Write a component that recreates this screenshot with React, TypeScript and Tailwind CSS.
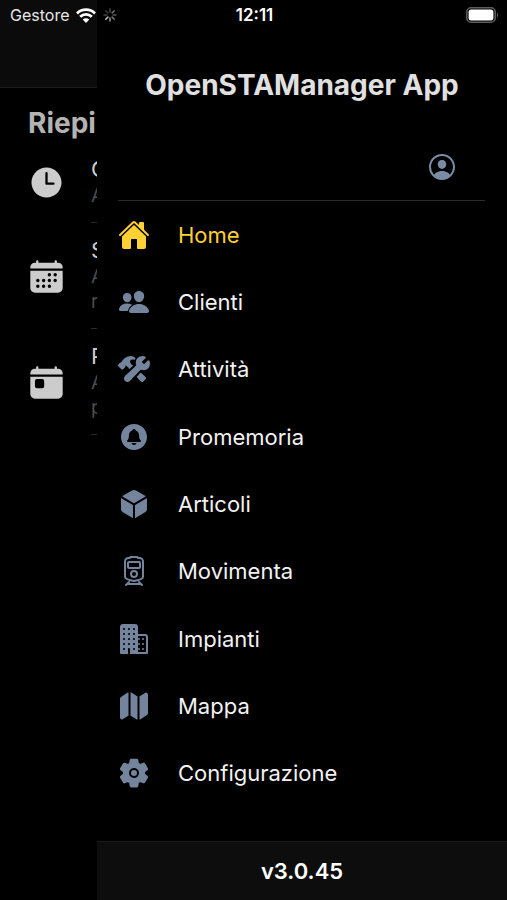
import {
  IoBusiness,
  IoCalendar,
  IoConstruct,
  IoCube,
  IoHome,
  IoMap,
  IoNotificationsCircle,
  IoPeople,
  IoPersonCircleOutline,
  IoSettings,
  IoTime,
  IoToday,
  IoTrainOutline,
} from 'react-icons/io5'

const MENU = [
  { label: 'Home', icon: IoHome, active: true },
  { label: 'Clienti', icon: IoPeople },
  { label: 'Attività', icon: IoConstruct },
  { label: 'Promemoria', icon: IoNotificationsCircle },
  { label: 'Articoli', icon: IoCube },
  { label: 'Movimenta', icon: IoTrainOutline },
  { label: 'Impianti', icon: IoBusiness },
  { label: 'Mappa', icon: IoMap },
  { label: 'Configurazione', icon: IoSettings },
]

const SUMMARY = [
  { icon: IoTime, title: 'O', lines: ['A'] },
  { icon: IoCalendar, title: 'S', lines: ['A', 'r'] },
  { icon: IoToday, title: 'P', lines: ['A', 'p'] },
]

const SPOKES = [
  { angle: 0, color: '#4a4a4a' },
  { angle: 45, color: '#6a6a6a' },
  { angle: 90, color: '#555555' },
  { angle: 135, color: '#777777' },
  { angle: 180, color: '#999999' },
  { angle: 225, color: '#bbbbbb' },
  { angle: 270, color: '#444444' },
  { angle: 315, color: '#3a3a3a' },
]

function StatusBar() {
  return (
    <div className="absolute inset-x-0 top-0 z-10 grid h-[30px] grid-cols-3 items-center pl-[10px] pr-[8px] text-white">
      <div className="flex items-center gap-[7px]">
        <span className="text-[16px] leading-5 text-[#e6e6e6]">Gestore</span>
        <svg viewBox="0 0 20 15" className="h-[15px] w-5" fill="none" stroke="currentColor" strokeWidth="2.8">
          <path d="M1 5.4a12.8 12.8 0 0 1 18 0" />
          <path d="M4.2 8.8a8.2 8.2 0 0 1 11.6 0" />
          <path d="M10 15 6.7 11.6a4.7 4.7 0 0 1 6.6 0Z" fill="currentColor" stroke="none" />
        </svg>
        <svg viewBox="-7 -7 14 14" className="h-[14px] w-[14px]" strokeWidth="1.5" strokeLinecap="round">
          {SPOKES.map(s => (
            <line key={s.angle} y1="-3" y2="-6" stroke={s.color} transform={`rotate(${s.angle})`} />
          ))}
        </svg>
      </div>
      <span className="text-center text-[17px] font-semibold leading-5">12:11</span>
      <svg viewBox="0 0 33 16" className="h-4 w-[33px] justify-self-end">
        <rect x="0.8" y="0.8" width="28.4" height="14.4" rx="4.2" fill="none" stroke="#5c5c5c" strokeWidth="1.6" />
        <rect x="2.6" y="2.6" width="24.8" height="10.8" rx="2.6" fill="#fff" />
        <path d="M31 5.6c1.6.8 1.6 4 0 4.8Z" fill="#5c5c5c" />
      </svg>
    </div>
  )
}

function Summary() {
  return (
    <main className="w-[97px] shrink-0 overflow-hidden whitespace-nowrap">
      <header className="h-[88px] border-b border-[#1c1c1c] bg-[#0b0b0b]" />
      <h2 className="pl-7 pt-[17px] text-[28px] font-bold leading-[37px] text-[#b3b3b3]">Riepi</h2>
      <ul>
        {SUMMARY.map(({ icon: Icon, title, lines }) => (
          <li key={title} className="flex items-center pl-7">
            <Icon className="size-[37px] shrink-0 text-[#cccccc]" />
            <div className="ml-[26px] w-[120px] shrink-0 border-b border-[#2a2a2a] pb-[14px] pt-[13px]">
              <h3 className="text-[22px] leading-7 text-[#cccccc]">{title}</h3>
              {lines.map(line => (
                <p key={line} className="text-[19px] leading-[25px] text-[#4d4d4d]">{line}</p>
              ))}
            </div>
          </li>
        ))}
      </ul>
    </main>
  )
}

function Drawer() {
  return (
    <aside className="flex flex-1 flex-col bg-black">
      <h1 className="pt-[67px] text-center text-[28px] font-bold leading-9 text-[#e0e0e0]">OpenSTAManager App</h1>
      <div className="ml-[21px] mr-[22px] mt-[48px] flex justify-end border-b border-[#2a2a2a] pb-[17px] pr-[27px]">
        <button type="button" aria-label="Profilo" className="text-[#7b8ba5]">
          <IoPersonCircleOutline className="size-8" />
        </button>
      </div>
      <nav className="mb-[34px] flex flex-1 flex-col">
        {MENU.map(({ label, icon: Icon, active }) => (
          <a
            key={label}
            href="#"
            className={`flex flex-1 items-center gap-7 pl-[21px] text-[22px] leading-7 ${active ? 'text-[#fdd033]' : 'text-[#f2f2f2]'}`}
          >
            <Icon className={`size-8 shrink-0 ${active ? 'text-[#fdd033]' : 'text-[#74849c]'}`} />
            {label}
          </a>
        ))}
      </nav>
      <footer className="flex h-[59px] items-center justify-center border-t border-[#1a1a1a] bg-[#0d0d0d] text-[22px] font-semibold text-white">
        v3.0.45
      </footer>
    </aside>
  )
}

export default function App() {
  return (
    <div className="relative flex min-h-screen bg-black font-['Inter','Liberation_Sans',sans-serif]">
      <StatusBar />
      <Summary />
      <Drawer />
    </div>
  )
}
